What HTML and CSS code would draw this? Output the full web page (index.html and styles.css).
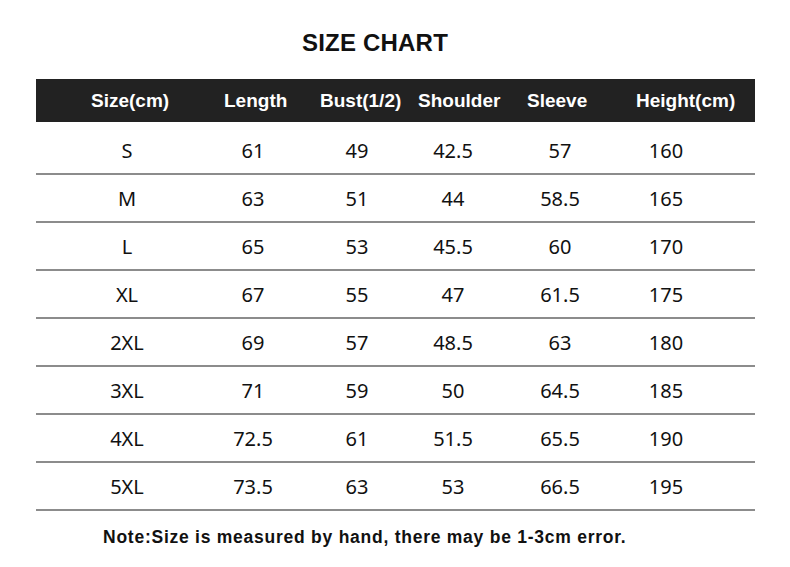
FILE: index.html
```html
<!DOCTYPE html>
<html>
<head>
<meta charset="utf-8">
<link rel="stylesheet" href="styles.css">
</head>
<body>
<div class="page">
  <h1 class="title">SIZE CHART</h1>
  <div class="chart">
    <div class="head">
      <span>Size(cm)</span><span>Length</span><span>Bust(1/2)</span><span>Shoulder</span><span>Sleeve</span><span>Height(cm)</span>
    </div>
    <div class="row first"><span>S</span><span>61</span><span>49</span><span>42.5</span><span>57</span><span>160</span><span></span></div>
    <div class="row"><span>M</span><span>63</span><span>51</span><span>44</span><span>58.5</span><span>165</span><span></span></div>
    <div class="row"><span>L</span><span>65</span><span>53</span><span>45.5</span><span>60</span><span>170</span><span></span></div>
    <div class="row"><span>XL</span><span>67</span><span>55</span><span>47</span><span>61.5</span><span>175</span><span></span></div>
    <div class="row"><span>2XL</span><span>69</span><span>57</span><span>48.5</span><span>63</span><span>180</span><span></span></div>
    <div class="row"><span>3XL</span><span>71</span><span>59</span><span>50</span><span>64.5</span><span>185</span><span></span></div>
    <div class="row"><span>4XL</span><span>72.5</span><span>61</span><span>51.5</span><span>65.5</span><span>190</span><span></span></div>
    <div class="row"><span>5XL</span><span>73.5</span><span>63</span><span>53</span><span>66.5</span><span>195</span><span></span></div>
  </div>
  <p class="note">Note:Size is measured by hand, there may be 1-3cm error.</p>
</div>
</body>
</html>
```
FILE: styles.css
```css
html, body {
  margin: 0;
  padding: 0;
  background: #fff;
}
.page {
  width: 790px;
  height: 567px;
  overflow: hidden;
}
.title {
  margin: 0;
  padding-top: 29px;
  width: 750px;
  text-align: center;
  font-family: "Liberation Sans", Arial, sans-serif;
  font-weight: bold;
  font-size: 24px;
  letter-spacing: 0.2px;
  line-height: 28px;
  color: #111;
}
.chart {
  margin: 22px 0 0 36px;
  width: 719px;
}
.head {
  display: grid;
  grid-template-columns: 133px 96px 98px 109px 109px auto;
  padding-left: 55px;
  height: 43px;
  background: #222;
  color: #fff;
  font-family: "Liberation Sans", Arial, sans-serif;
  font-weight: bold;
  font-size: 19px;
  line-height: 43px;
  white-space: nowrap;
}
.row {
  display: grid;
  grid-template-columns: 182px 70px 138px 54px 160px 52px 1fr;
  height: 46px;
  border-bottom: 2px solid #8c8c8c;
  font-family: "Noto Sans", "Open Sans", sans-serif;
  font-size: 20px;
  line-height: 47px;
  color: #111;
  text-align: center;
  white-space: nowrap;
}
.row.first {
  padding-top: 5px;
  height: 46px;
}
.note {
  margin: 16px 0 0 103px;
  font-family: "Liberation Sans", Arial, sans-serif;
  font-weight: bold;
  font-size: 17.5px;
  letter-spacing: 0.75px;
  line-height: 20px;
  color: #111;
}
```
